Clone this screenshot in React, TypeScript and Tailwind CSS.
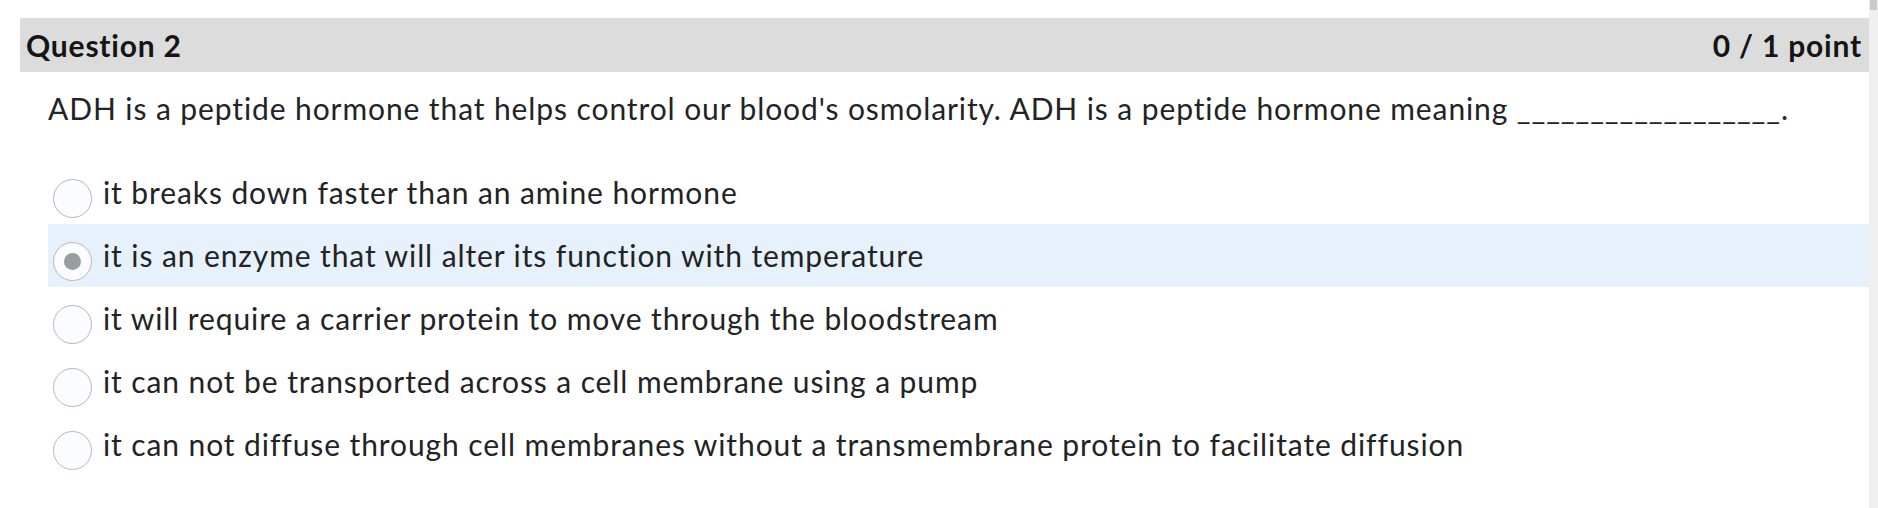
const options = [
  "it breaks down faster than an amine hormone",
  "it is an enzyme that will alter its function with temperature",
  "it will require a carrier protein to move through the bloodstream",
  "it can not be transported across a cell membrane using a pump",
  "it can not diffuse through cell membranes without a transmembrane protein to facilitate diffusion",
];

const Radio = ({ checked }: { checked: boolean }) => (
  <span className="mt-[18px] flex h-[39px] w-[39px] shrink-0 items-center justify-center rounded-full border border-[#b8b8b8] bg-[#fafcff]">
    {checked && <span className="h-[17px] w-[17px] rounded-full bg-[#9a9ca2]" />}
  </span>
);

export default function App() {
  const selected = 1;

  return (
    <div className="flex h-[508px] w-full bg-white font-['Lato','Noto_Sans',sans-serif] text-[#222325]">
      <div className="flex-1 pl-5 pt-[18px]">
        <div className="flex h-[54px] items-center justify-between bg-[#dcdcdc] pl-[6px] pr-[7px] text-[30px] tracking-[0.8px] text-[#151515]">
          <h2 className="font-bold">Question 2</h2>
          <span className="font-bold">0 / 1 point</span>
        </div>

        <p className="mt-[18px] pl-[28px] text-[30px] leading-[36px] tracking-[0.9px]">
          ADH is a peptide hormone that helps control our blood's osmolarity. ADH is a peptide hormone meaning __________________.
        </p>

        <div className="mt-[35px] pl-[28px]">
          {options.map((text, i) => (
            <label
              key={i}
              className={
                "flex h-[63px] items-start gap-[11px] pl-[5px] " +
                (i === selected ? "bg-[#e7f1fb]" : "")
              }
            >
              <Radio checked={i === selected} />
              <span className="pt-[13px] text-[30px] leading-[36px] tracking-[0.9px]">{text}</span>
            </label>
          ))}
        </div>
      </div>

      <div className="w-[9px] bg-[#f0f0f0]">
        <div className="ml-px h-[10px] w-[7px] bg-[#c9c9c9]" />
      </div>
    </div>
  );
}
